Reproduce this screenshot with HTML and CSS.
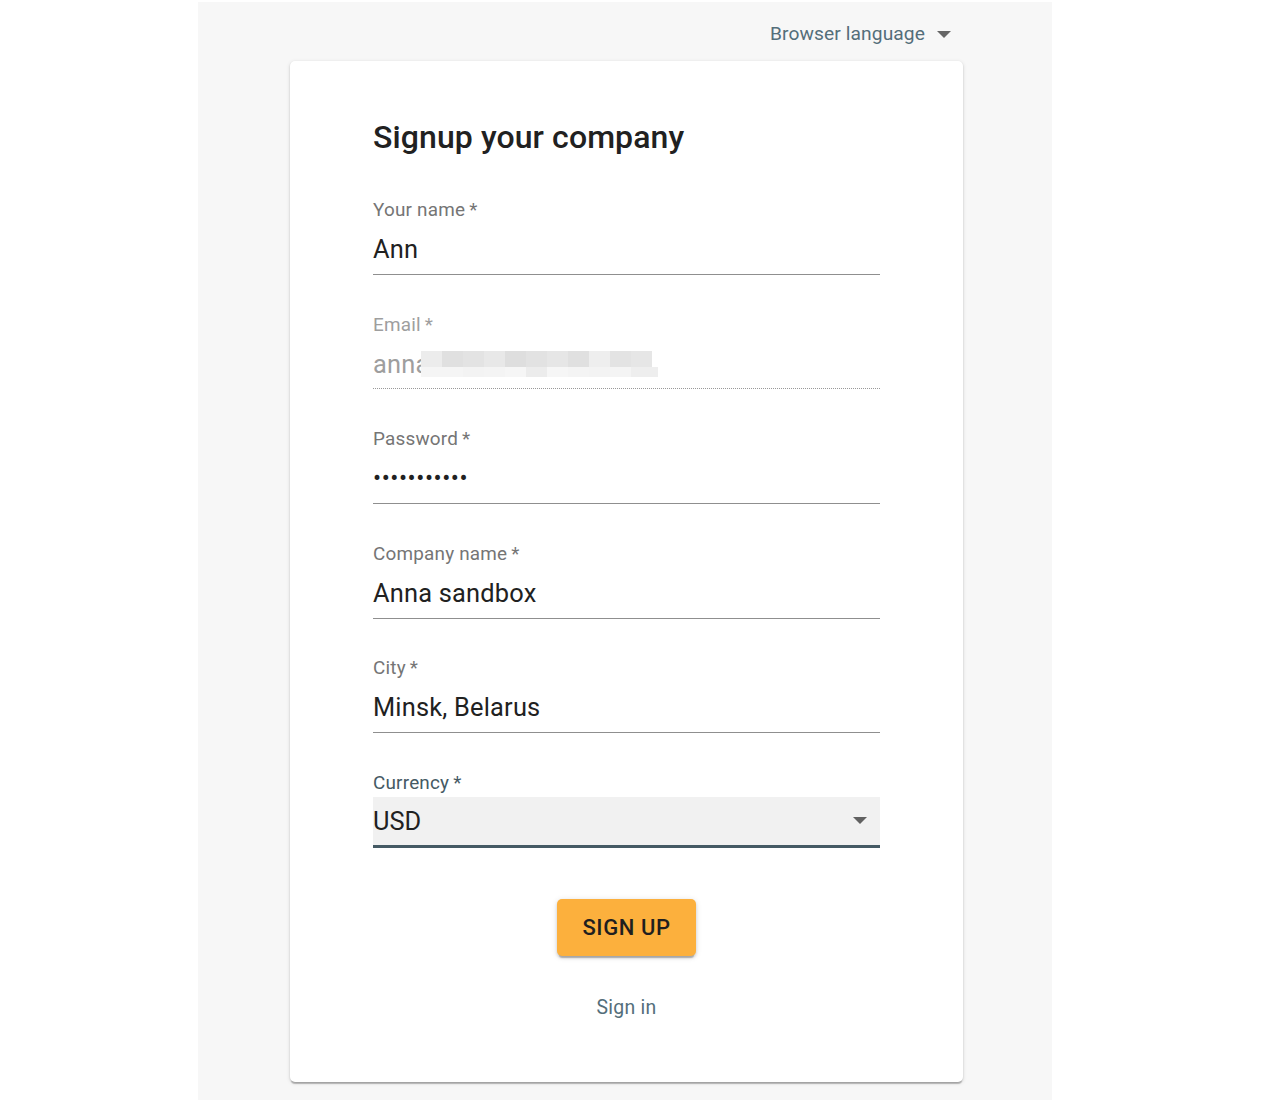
FILE: index.html
```html
<!DOCTYPE html>
<html lang="en">
<head>
<meta charset="utf-8">
<title>Signup your company</title>
<link rel="stylesheet" href="styles.css">
</head>
<body>
<div class="page">
  <div class="topbar">
    <div class="lang">
      <span>Browser language</span>
      <svg class="caret" width="14" height="7" viewBox="0 0 14 7"><path d="M0 0h14L7 7z" fill="#666"/></svg>
    </div>
  </div>
  <div class="card">
    <h1 class="title">Signup your company</h1>
    <form class="form">
      <div class="field">
        <div class="label">Your name&thinsp;*</div>
        <div class="value">Ann</div>
      </div>
      <div class="field disabled">
        <div class="label">Email&thinsp;*</div>
        <div class="value">anna
          <div class="redact">
            <div class="row top">
              <i style="background:#ececec"></i><i style="background:#e0e0e0"></i><i style="background:#e3e3e3"></i><i style="background:#e8e8e8"></i><i style="background:#dedede"></i><i style="background:#e2e2e2"></i><i style="background:#e6e6e6"></i><i style="background:#e0e0e0"></i><i style="background:#eeeeee"></i><i style="background:#e3e3e3"></i><i style="background:#e6e6e6"></i>
            </div>
            <div class="row bottom">
              <i style="background:#f5f5f5"></i><i style="background:#f5f5f5"></i><i style="background:#f3f3f3"></i><i style="background:#f4f4f4"></i><i style="background:#f6f6f6"></i><i style="background:#ececec"></i><i style="background:#f6f6f6"></i><i style="background:#f4f4f4"></i><i style="background:#f3f3f3"></i><i style="background:#f4f4f4"></i><i style="background:#eeeeee"></i>
            </div>
          </div>
        </div>
      </div>
      <div class="field">
        <div class="label">Password&thinsp;*</div>
        <div class="value dots">•••••••••••</div>
      </div>
      <div class="field">
        <div class="label">Company name&thinsp;*</div>
        <div class="value">Anna sandbox</div>
      </div>
      <div class="field">
        <div class="label">City&thinsp;*</div>
        <div class="value">Minsk, Belarus</div>
      </div>
      <div class="field select">
        <div class="label focused">Currency&thinsp;*</div>
        <div class="selectbox">
          <span>USD</span>
          <svg class="caret" width="14" height="7" viewBox="0 0 14 7"><path d="M0 0h14L7 7z" fill="#616161"/></svg>
        </div>
      </div>
      <div class="actions">
        <button type="button" class="btn">SIGN UP</button>
        <a class="signin">Sign in</a>
      </div>
    </form>
  </div>
</div>
</body>
</html>
```

FILE: styles.css
```css
* { box-sizing: border-box; }
html, body { margin: 0; padding: 0; background: #ffffff; }
body {
  font-family: Roboto, "Liberation Sans", Arial, sans-serif;
  color: #212121;
}
.page {
  margin: 2px 0 0 198px;
  width: 854px;
  height: 1098px;
  background: #f7f7f7;
  padding-top: 17px;
}
.topbar {
  display: flex;
  justify-content: flex-end;
  padding-right: 101px;
  height: 42px;
}
.lang {
  display: flex;
  align-items: center;
  gap: 12px;
  height: 28px;
  font-size: 19.2px;
  color: #546e7a;
  letter-spacing: 0.1px;
}
.lang .caret { margin-top: 3px; }
.card {
  margin-left: 92px;
  width: 673px;
  height: 1021px;
  background: #fff;
  border-radius: 5px;
  box-shadow: 0 3px 1px -1px rgba(0,0,0,0.2), 0 1px 2px 0 rgba(0,0,0,0.14), 0 1px 4px 0 rgba(0,0,0,0.12);
  padding: 56px 83px 0 83px;
}
.title {
  margin: 0;
  font-size: 32px;
  line-height: 40px;
  font-weight: 500;
  color: #212121;
  letter-spacing: 0.1px;
}
.form { margin-top: 41px; display: flex; flex-direction: column; }
.field { margin-bottom: 37.5px; }
.label {
  font-size: 18.9px;
  line-height: 24px;
  color: #757575;
  letter-spacing: 0.2px;
}
.label.focused { color: #455a64; }
.value {
  position: relative;
  margin-top: 11px;
  font-size: 25.4px;
  line-height: 32px;
  height: 42px;
  padding-bottom: 9px;
  border-bottom: 1px solid #8f8f8f;
  color: #212121;
  letter-spacing: 0.2px;
}
.value.dots {
  font-size: 24px;
  letter-spacing: 0.55px;
}
.disabled .label { color: #9e9e9e; }
.disabled .value {
  color: #9e9e9e;
  border-bottom: 1px dotted #999;
  height: 41px;
}
.disabled + .field { margin-top: 1px; }
.redact {
  position: absolute;
  left: 48px;
  top: 3px;
  display: flex;
  flex-direction: column;
}
.redact .row { display: flex; }
.redact .row i { display: block; width: 21px; }
.redact .top i { height: 16px; }
.redact .bottom i { height: 10px; }
.redact .bottom i:last-child { width: 27px; }
.select { margin-bottom: 0; }
.selectbox {
  margin-top: 2px;
  height: 51px;
  background: #f1f1f1;
  border-bottom: 3px solid #455a64;
  display: flex;
  align-items: center;
  justify-content: space-between;
  padding: 0 13px 0 0;
  font-size: 25.4px;
  color: #212121;
}
.selectbox span { line-height: 48px; }
.actions {
  display: flex;
  flex-direction: column;
  align-items: center;
  margin-top: 51px;
}
.btn {
  width: 139px;
  height: 57px;
  border: none;
  border-radius: 5px;
  background: #fcb03d;
  color: #1f1f1f;
  font-family: Roboto, "Liberation Sans", Arial, sans-serif;
  font-size: 22px;
  font-weight: 500;
  letter-spacing: 0.6px;
  box-shadow: 0 4px 1px -2px rgba(0,0,0,0.2), 0 2px 3px 0 rgba(0,0,0,0.14), 0 1px 6px 0 rgba(0,0,0,0.12);
  padding: 0;
}
.signin {
  margin-top: 40px;
  font-size: 19.4px;
  line-height: 24px;
  color: #546e7a;
  letter-spacing: 0.3px;
}
```
